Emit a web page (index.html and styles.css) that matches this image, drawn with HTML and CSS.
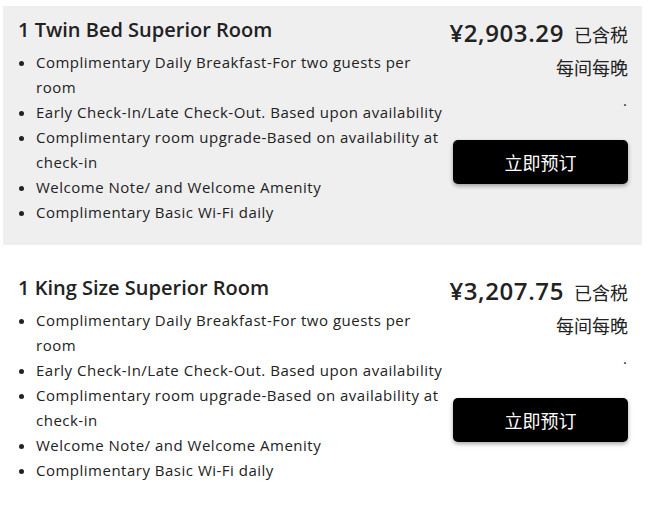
FILE: index.html
```html
<!DOCTYPE html>
<html lang="zh-CN">
<head>
<meta charset="utf-8">
<title>Rooms</title>
<link rel="stylesheet" href="styles.css">
</head>
<body>
<div class="rooms">
  <section class="room room--shaded">
    <div class="room-info">
      <h2 class="room-title">1 Twin Bed Superior Room</h2>
      <ul class="perks">
        <li>Complimentary Daily Breakfast-For two guests per room</li>
        <li>Early Check-In/Late Check-Out. Based upon availability</li>
        <li>Complimentary room upgrade-Based on availability at check-in</li>
        <li>Welcome Note/ and Welcome Amenity</li>
        <li>Complimentary Basic Wi-Fi daily</li>
      </ul>
    </div>
    <div class="room-price">
      <div class="price"><span class="amount">¥2,903.29</span><span class="tax">已含税</span></div>
      <div class="per">每间每晚</div>
      <div class="dot">.</div>
      <button class="book">立即预订</button>
    </div>
  </section>
  <section class="room">
    <div class="room-info">
      <h2 class="room-title">1 King Size Superior Room</h2>
      <ul class="perks">
        <li>Complimentary Daily Breakfast-For two guests per room</li>
        <li>Early Check-In/Late Check-Out. Based upon availability</li>
        <li>Complimentary room upgrade-Based on availability at check-in</li>
        <li>Welcome Note/ and Welcome Amenity</li>
        <li>Complimentary Basic Wi-Fi daily</li>
      </ul>
    </div>
    <div class="room-price">
      <div class="price"><span class="amount">¥3,207.75</span><span class="tax">已含税</span></div>
      <div class="per">每间每晚</div>
      <div class="dot">.</div>
      <button class="book">立即预订</button>
    </div>
  </section>
</div>
</body>
</html>
```
FILE: styles.css
```css
html, body {
  margin: 0;
  padding: 0;
  background: #ffffff;
}
body {
  font-family: "Open Sans", "Noto Sans CJK SC", sans-serif;
  color: #1f1f1f;
}
.rooms {
  padding: 6px 6px 0 3px;
  display: flex;
  flex-direction: column;
  gap: 19px;
}
.room {
  display: flex;
  justify-content: space-between;
  padding: 12px 14px 20px 15px;
  height: 239px;
  box-sizing: border-box;
}
.room--shaded {
  background: #efefef;
}
.room-info {
  width: 428px;
  flex: none;
}
.room-title {
  margin: 0;
  font-size: 20px;
  line-height: 24px;
  font-weight: 600;
  color: #222;
}
.perks {
  margin: 8px 0 0 0;
  padding-left: 18px;
  font-size: 15px;
  line-height: 25px;
  letter-spacing: 0.5px;
  color: #222;
}
.room-price {
  width: 175px;
  flex: none;
  display: flex;
  flex-direction: column;
  align-items: flex-end;
}
.price {
  height: 32px;
  display: flex;
  align-items: baseline;
  gap: 10px;
  white-space: nowrap;
  margin-top: -1px;
}
.amount {
  font-size: 24px;
  line-height: 32px;
  font-weight: 600;
  letter-spacing: 0.6px;
  color: #222;
}
.tax {
  font-family: "Noto Sans CJK SC", sans-serif;
  font-size: 18px;
  line-height: 32px;
  color: #222;
}
.per {
  font-family: "Noto Sans CJK SC", sans-serif;
  font-size: 18px;
  line-height: 26px;
  height: 26px;
  margin-top: 5px;
  color: #222;
}
.dot {
  font-size: 15px;
  line-height: 20px;
  height: 20px;
  margin-top: 10px;
  color: #222;
  padding-right: 1px;
}
.book {
  margin-top: 30px;
  width: 175px;
  height: 44px;
  border: none;
  border-radius: 5px;
  background: #000;
  color: #fff;
  font-family: "Noto Sans CJK SC", sans-serif;
  font-size: 18px;
  box-shadow: 0 2px 4px rgba(0, 0, 0, 0.35);
  cursor: pointer;
  padding: 0;
}
```
